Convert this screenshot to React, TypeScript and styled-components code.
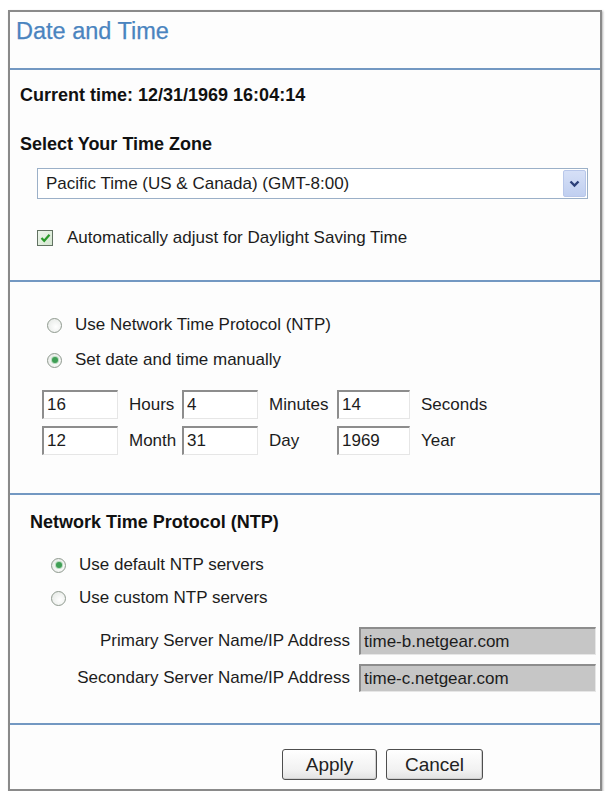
import React from "react";
import styled, { createGlobalStyle } from "styled-components";

const GlobalStyle = createGlobalStyle`
  html, body {
    margin: 0;
    padding: 0;
    background: #ffffff;
  }
  body {
    font-family: "Liberation Sans", Arial, sans-serif;
    color: #151515;
  }
`;

const Frame = styled.div`
  box-sizing: border-box;
  width: 594px;
  height: 781px;
  margin: 10px 0 0 8px;
  border: 2px solid #8a8a8a;
  box-shadow: 1px 1px 2px rgba(0, 0, 0, 0.3);
  display: flex;
  flex-direction: column;
  background: #fdfdfd;
`;

const Header = styled.div`
  height: 56px;
  display: flex;
  align-items: flex-start;
  padding: 6px 0 0 6px;
  box-sizing: border-box;
`;

const Title = styled.h1`
  margin: 0;
  font-size: 23.5px;
  font-weight: normal;
  color: #4a84bf;
  line-height: 26px;
  -webkit-text-stroke: 0.25px #4a84bf;
`;

const Rule = styled.div`
  height: 2px;
  background: #7398c2;
  flex: none;
`;

const Section = styled.div<{ $top: number; $bottom: number; $left: number }>`
  display: flex;
  flex-direction: column;
  padding: ${(p) => p.$top}px 4px ${(p) => p.$bottom}px ${(p) => p.$left}px;
  flex: none;
`;

const Spacer = styled.div<{ $h: number }>`
  height: ${(p) => p.$h}px;
  flex: none;
`;

const Heading = styled.div`
  font-size: 18px;
  font-weight: bold;
  line-height: 20px;
  color: #111;
`;

const Label = styled.span`
  font-size: 17px;
  line-height: 20px;
  color: #1c1c1c;
`;

const FakeSelect = styled.div`
  margin-left: 17px;
  width: 551px;
  height: 31px;
  box-sizing: border-box;
  border: 1px solid #9bb0c8;
  background: #fff;
  display: flex;
  align-items: stretch;
`;

const SelectText = styled.span`
  flex: 1;
  font-size: 17px;
  line-height: 29px;
  padding-left: 8px;
  color: #1c1c1c;
`;

const SelectArrow = styled.span`
  width: 21px;
  margin: 1px;
  background: linear-gradient(#d6e0f7, #c0cff0);
  border: 1px solid #b8c7ea;
  border-radius: 2px;
  display: flex;
  align-items: center;
  justify-content: center;
`;

const CheckRow = styled.label<{ $indent: number }>`
  display: flex;
  align-items: center;
  gap: 14px;
  margin-left: ${(p) => p.$indent}px;
`;

const CheckBox = styled.span`
  width: 16px;
  height: 16px;
  box-sizing: border-box;
  border: 1px solid #627262;
  background: linear-gradient(135deg, #eef6ec, #d4e6d0);
  display: flex;
  align-items: center;
  justify-content: center;
`;

const RadioRow = styled.label<{ $indent: number }>`
  display: flex;
  align-items: center;
  gap: 13px;
  margin-left: ${(p) => p.$indent}px;
`;

const RadioDot = styled.span<{ $on: boolean }>`
  width: 15px;
  height: 15px;
  box-sizing: border-box;
  border-radius: 50%;
  border: 1px solid #8f9a8f;
  background: radial-gradient(circle at 60% 60%, #ffffff 0%, #e2e6e2 100%);
  display: flex;
  align-items: center;
  justify-content: center;
  &::after {
    content: "";
    display: ${(p) => (p.$on ? "block" : "none")};
    width: 6px;
    height: 6px;
    border-radius: 50%;
    background: #3f9e55;
    box-shadow: 0 0 0 1px #b9dcbf;
  }
`;

const TimeGrid = styled.div`
  display: grid;
  grid-template-columns: 76px 64px 76px 79px 73px auto;
  grid-template-rows: 29px 29px;
  row-gap: 7px;
  align-items: center;
  margin-left: 22px;
`;

const Field = styled.input<{ $grey?: boolean }>`
  box-sizing: border-box;
  width: 100%;
  height: 100%;
  margin: 0;
  padding: 0 0 0 3px;
  font-family: "Liberation Sans", Arial, sans-serif;
  font-size: 17px;
  color: #1c1c1c;
  background: ${(p) => (p.$grey ? "#c6c6c6" : "#ffffff")};
  border-style: solid;
  border-width: 2px 1px 1px 2px;
  border-color: #8d8d8d #e6e6e6 #e6e6e6 #8d8d8d;
  outline: none;
`;

const UnitLabel = styled.span`
  font-size: 17px;
  padding-left: 11px;
  color: #1c1c1c;
`;

const ServerGrid = styled.div`
  display: grid;
  grid-template-columns: 320px 237px;
  grid-template-rows: 28px 28px;
  row-gap: 9px;
  column-gap: 9px;
  align-items: center;
`;

const ServerLabel = styled.span`
  font-size: 17px;
  text-align: right;
  color: #1c1c1c;
`;

const Footer = styled.div`
  flex: 1;
  display: flex;
  align-items: flex-start;
  gap: 9px;
  padding: 24px 0 0 272px;
`;

const Button = styled.button<{ $w: number }>`
  width: ${(p) => p.$w}px;
  height: 31px;
  box-sizing: border-box;
  border: 1px solid #4e4e4e;
  border-radius: 3px;
  background: linear-gradient(#ffffff, #f1f1f1 70%, #e2e2e2);
  font-family: "Liberation Sans", Arial, sans-serif;
  font-size: 19px;
  color: #222;
  padding: 0;
  box-shadow: inset -1px -1px 0 #d0d0d0;
`;

export default function App() {
  return (
    <>
      <GlobalStyle />
      <Frame>
        <Header>
          <Title>Date and Time</Title>
        </Header>
        <Rule />

        <Section $top={15} $bottom={32} $left={10}>
          <Heading>Current time: 12/31/1969 16:04:14</Heading>
          <Spacer $h={29} />
          <Heading>Select Your Time Zone</Heading>
          <Spacer $h={14} />
          <FakeSelect>
            <SelectText>Pacific Time (US &amp; Canada) (GMT-8:00)</SelectText>
            <SelectArrow>
              <svg width="11" height="8" viewBox="0 0 11 8">
                <path d="M1.5 1.5 L5.5 5.5 L9.5 1.5" fill="none" stroke="#2c3f78" strokeWidth="2.4" />
              </svg>
            </SelectArrow>
          </FakeSelect>
          <Spacer $h={29} />
          <CheckRow $indent={17}>
            <CheckBox>
              <svg width="11" height="10" viewBox="0 0 11 10">
                <path d="M1.5 5 L4.2 7.8 L9.5 1.8" fill="none" stroke="#2a9a2a" strokeWidth="2.2" />
              </svg>
            </CheckBox>
            <Label>Automatically adjust for Daylight Saving Time</Label>
          </CheckRow>
        </Section>
        <Rule />

        <Section $top={33} $bottom={38} $left={10}>
          <RadioRow $indent={27}>
            <RadioDot $on={false} />
            <Label>Use Network Time Protocol (NTP)</Label>
          </RadioRow>
          <Spacer $h={15} />
          <RadioRow $indent={27}>
            <RadioDot $on={true} />
            <Label>Set date and time manually</Label>
          </RadioRow>
          <Spacer $h={20} />
          <TimeGrid>
            <Field readOnly value="16" />
            <UnitLabel>Hours</UnitLabel>
            <Field readOnly value="4" />
            <UnitLabel>Minutes</UnitLabel>
            <Field readOnly value="14" />
            <UnitLabel>Seconds</UnitLabel>
            <Field readOnly value="12" />
            <UnitLabel>Month</UnitLabel>
            <Field readOnly value="31" />
            <UnitLabel>Day</UnitLabel>
            <Field readOnly value="1969" />
            <UnitLabel>Year</UnitLabel>
          </TimeGrid>
        </Section>
        <Rule />

        <Section $top={17} $bottom={31} $left={20}>
          <Heading>Network Time Protocol (NTP)</Heading>
          <Spacer $h={23} />
          <RadioRow $indent={21}>
            <RadioDot $on={true} />
            <Label>Use default NTP servers</Label>
          </RadioRow>
          <Spacer $h={13} />
          <RadioRow $indent={21}>
            <RadioDot $on={false} />
            <Label>Use custom NTP servers</Label>
          </RadioRow>
          <Spacer $h={19} />
          <ServerGrid>
            <ServerLabel>Primary Server Name/IP Address</ServerLabel>
            <Field $grey readOnly value="time-b.netgear.com" />
            <ServerLabel>Secondary Server Name/IP Address</ServerLabel>
            <Field $grey readOnly value="time-c.netgear.com" />
          </ServerGrid>
        </Section>
        <Rule />

        <Footer>
          <Button $w={95}>Apply</Button>
          <Button $w={97}>Cancel</Button>
        </Footer>
      </Frame>
    </>
  );
}
